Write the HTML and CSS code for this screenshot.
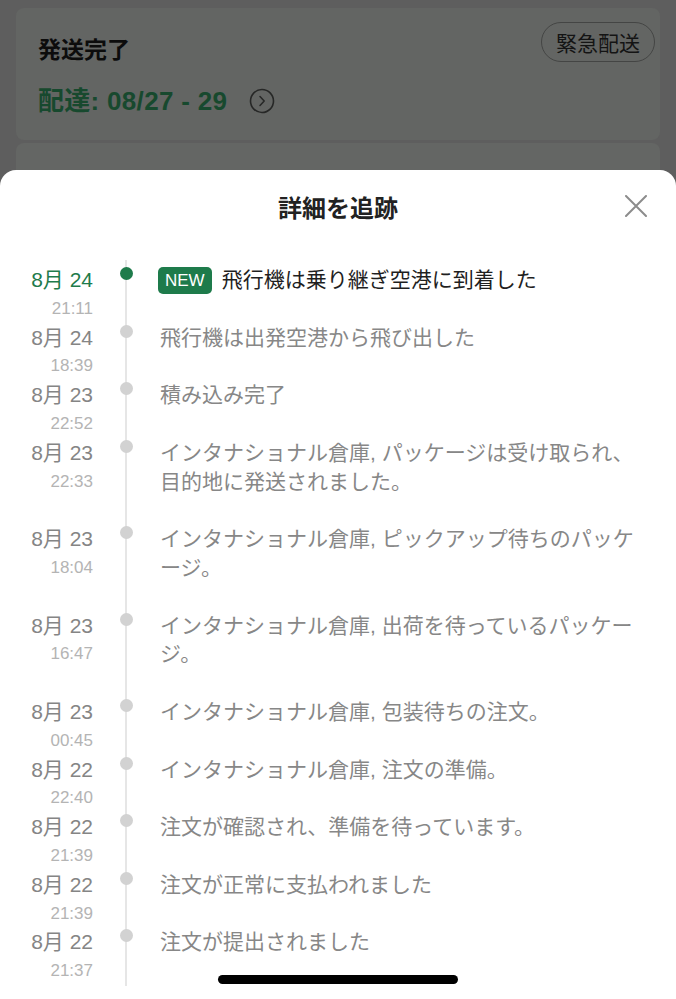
FILE: index.html
```html
<!DOCTYPE html>
<html lang="ja">
<head>
  <meta charset="UTF-8">
  <title>詳細を追跡</title>
  <link rel="stylesheet" href="styles.css">
</head>
<body>
  <div class="screen">
    <div class="backdrop">
      <div class="card">
        <div class="card-head">
          <h2 class="status">発送完了</h2>
          <button class="rush">緊急配送</button>
        </div>
        <div class="eta">
          配達: 08/27 - 29
          <svg class="eta-icon" width="26" height="26" viewBox="0 0 26 26">
            <circle cx="13" cy="13" r="11.5" fill="none" stroke="#262726" stroke-width="1.6"/>
            <path d="M11 8.5 L15.2 13 L11 17.5" fill="none" stroke="#262726" stroke-width="1.5" stroke-linecap="round" stroke-linejoin="round"/>
          </svg>
        </div>
      </div>
      <div class="card card-next"></div>
    </div>

    <div class="sheet">
      <div class="sheet-head">
        <span></span>
        <h1>詳細を追跡</h1>
        <svg class="close" width="22" height="22" viewBox="0 0 22 22">
          <path d="M1 1 L21 21 M21 1 L1 21" stroke="#8c8c8c" stroke-width="2" stroke-linecap="round"/>
        </svg>
      </div>

      <ul class="timeline">
        <li class="event is-new">
          <div class="when"><div class="day">8月 24</div><div class="time">21:11</div></div>
          <span class="dot"></span>
          <p class="what"><span class="badge">NEW</span>飛行機は乗り継ぎ空港に到着した</p>
        </li>
        <li class="event">
          <div class="when"><div class="day">8月 24</div><div class="time">18:39</div></div>
          <span class="dot"></span>
          <p class="what">飛行機は出発空港から飛び出した</p>
        </li>
        <li class="event">
          <div class="when"><div class="day">8月 23</div><div class="time">22:52</div></div>
          <span class="dot"></span>
          <p class="what">積み込み完了</p>
        </li>
        <li class="event">
          <div class="when"><div class="day">8月 23</div><div class="time">22:33</div></div>
          <span class="dot"></span>
          <p class="what">インタナショナル倉庫, パッケージは受け取られ、目的地に発送されました。</p>
        </li>
        <li class="event">
          <div class="when"><div class="day">8月 23</div><div class="time">18:04</div></div>
          <span class="dot"></span>
          <p class="what">インタナショナル倉庫, ピックアップ待ちのパッケージ。</p>
        </li>
        <li class="event">
          <div class="when"><div class="day">8月 23</div><div class="time">16:47</div></div>
          <span class="dot"></span>
          <p class="what">インタナショナル倉庫, 出荷を待っているパッケージ。</p>
        </li>
        <li class="event">
          <div class="when"><div class="day">8月 23</div><div class="time">00:45</div></div>
          <span class="dot"></span>
          <p class="what">インタナショナル倉庫, 包装待ちの注文。</p>
        </li>
        <li class="event">
          <div class="when"><div class="day">8月 22</div><div class="time">22:40</div></div>
          <span class="dot"></span>
          <p class="what">インタナショナル倉庫, 注文の準備。</p>
        </li>
        <li class="event">
          <div class="when"><div class="day">8月 22</div><div class="time">21:39</div></div>
          <span class="dot"></span>
          <p class="what">注文が確認され、準備を待っています。</p>
        </li>
        <li class="event">
          <div class="when"><div class="day">8月 22</div><div class="time">21:39</div></div>
          <span class="dot"></span>
          <p class="what">注文が正常に支払われました</p>
        </li>
        <li class="event">
          <div class="when"><div class="day">8月 22</div><div class="time">21:37</div></div>
          <span class="dot"></span>
          <p class="what">注文が提出されました</p>
        </li>
      </ul>
    </div>

    <div class="home-bar"></div>
  </div>
</body>
</html>
```

FILE: styles.css
```css
* {
  box-sizing: border-box;
}

body {
  margin: 0;
  background: #5e5e5e;
  font-family: "Liberation Sans", "Noto Sans CJK JP", sans-serif;
}

.screen {
  position: relative;
  height: 999px;
  display: flex;
  flex-direction: column;
  overflow: hidden;
}

/* dimmed page behind the sheet */
.backdrop {
  height: 170px;
  flex-shrink: 0;
  padding: 8px 16px 0 16px;
  display: flex;
  flex-direction: column;
  gap: 3px;
  overflow: hidden;
}

.card {
  background: #636563;
  border-radius: 8px;
  height: 132px;
  flex-shrink: 0;
  padding: 14px 8px 0 22px;
}

.card-next {
  background: #646664;
  height: 60px;
}

.card-head {
  display: flex;
  justify-content: space-between;
  align-items: flex-start;
}

.status {
  margin: 0;
  padding-top: 13px;
  font-size: 23px;
  line-height: 30px;
  font-weight: bold;
  color: #0c0c0c;
}

.rush {
  height: 40px;
  margin-right: -3px;
  padding: 0 14px;
  border: 1.5px solid #444544;
  border-radius: 20px;
  background: transparent;
  font-family: inherit;
  font-size: 21px;
  color: #141414;
}

.eta {
  margin-top: 21px;
  display: flex;
  align-items: center;
  font-size: 26px;
  letter-spacing: 0.3px;
  line-height: 30px;
  font-weight: bold;
  color: #17492e;
}

.eta-icon {
  margin-left: 22px;
}

/* bottom sheet */
.sheet {
  flex: 1;
  background: #fff;
  border-radius: 16px 16px 0 0;
  overflow: hidden;
}

.sheet-head {
  height: 72px;
  display: grid;
  grid-template-columns: 1fr auto 1fr;
  align-items: center;
}

.sheet-head h1 {
  margin: 0;
  font-size: 24px;
  font-weight: bold;
  color: #222;
}

.close {
  justify-self: end;
  margin-right: 29px;
}

.timeline {
  list-style: none;
  margin: 18px 0 0;
  padding: 6px 31px 0 0;
  background: linear-gradient(#e6e6e6, #e6e6e6) no-repeat 125px 0 / 2px 100%;
}

.event {
  display: grid;
  grid-template-columns: 93px 67px 1fr;
}

.when {
  text-align: right;
}

.day {
  font-size: 21px;
  line-height: 28.8px;
  color: #858585;
}

.time {
  font-size: 17px;
  line-height: 28.8px;
  color: #b4b4b4;
}

.dot {
  width: 13px;
  height: 13px;
  margin: 1px auto 0;
  border-radius: 50%;
  background: #d2d2d2;
}

.what {
  margin: 0;
  padding-bottom: 28.8px;
  font-size: 21px;
  line-height: 28.8px;
  color: #878787;
}

.is-new .day {
  color: #1e7b4b;
}

.is-new .dot {
  background: #1e7b4b;
}

.is-new .what {
  color: #1f1f1f;
}

.badge {
  display: inline-block;
  margin: 0 10px 0 -2px;
  padding: 0 7px;
  height: 27px;
  line-height: 27px;
  border-radius: 5px;
  background: #1e7b4b;
  color: #fff;
  font-size: 17px;
  vertical-align: 1px;
}

.home-bar {
  position: absolute;
  left: 218px;
  bottom: 15px;
  width: 240px;
  height: 9px;
  border-radius: 5px;
  background: #000;
}
```
